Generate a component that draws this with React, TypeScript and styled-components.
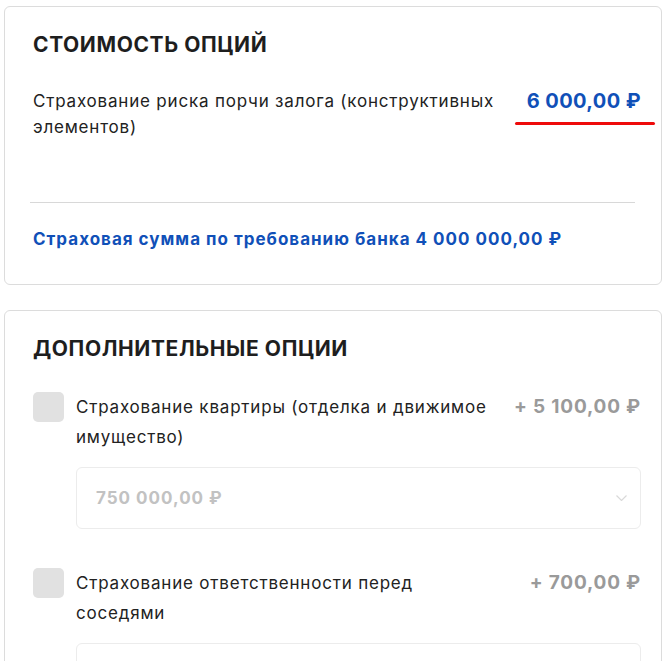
import styled, { createGlobalStyle } from "styled-components";

const GlobalStyle = createGlobalStyle`
  body {
    margin: 0;
    background: #ffffff;
    font-family: Inter, "Noto Sans", sans-serif;
    color: #222222;
  }
`;

const options = [
  {
    title: "Страхование квартиры (отделка и движимое имущество)",
    price: "+ 5 100,00 ₽",
    sum: "750 000,00 ₽",
  },
  {
    title: "Страхование ответственности перед соседями",
    price: "+ 700,00 ₽",
    sum: "300 000,00 ₽",
  },
];

const App = () => {
  return (
    <Page>
      <GlobalStyle />
      <Card>
        <Title>Стоимость опций</Title>
        <CostRow>
          <CostText>Страхование риска порчи залога (конструктивных элементов)</CostText>
          <CostPrice>6 000,00 ₽</CostPrice>
        </CostRow>
        <Divider />
        <BankSum>Страховая сумма по требованию банка 4 000 000,00 ₽</BankSum>
      </Card>

      <Card $tall>
        <Title>Дополнительные опции</Title>
        {options.map((opt) => (
          <Option key={opt.title}>
            <OptionHead>
              <Checkbox />
              <OptionText>{opt.title}</OptionText>
              <OptionPrice>{opt.price}</OptionPrice>
            </OptionHead>
            <Select>
              <span>{opt.sum}</span>
              <svg width="11" height="6" viewBox="0 0 11 6" fill="none">
                <path d="M0.5 0.5l5 5 5-5" stroke="#d9d9d9" strokeWidth="1.2" />
              </svg>
            </Select>
          </Option>
        ))}
      </Card>
    </Page>
  );
};

export default App;

const Page = styled.div`
  padding: 6px 7px 0 4px;
  display: flex;
  flex-direction: column;
  gap: 25px;
  height: 661px;
  overflow: hidden;
  box-sizing: border-box;
`;

const Card = styled.div<{ $tall?: boolean }>`
  border: 1px solid #dcdcdc;
  border-radius: 6px;
  padding: 26px 20px ${(p) => (p.$tall ? "0" : "34px")} 28px;
  flex-shrink: 0;
`;

const Title = styled.h2`
  margin: 0 0 31px;
  font-size: 21px;
  line-height: 24px;
  font-weight: 700;
  text-transform: uppercase;
  color: #1e1e1e;
  letter-spacing: 0.6px;
`;

const CostRow = styled.div`
  display: flex;
  justify-content: space-between;
  align-items: flex-start;
  gap: 20px;
  min-height: 114px;
`;

const CostText = styled.div`
  font-size: 17px;
  line-height: 26px;
  letter-spacing: 0.8px;
  max-width: 475px;
`;

const CostPrice = styled.div`
  position: relative;
  font-size: 20px;
  line-height: 26px;
  font-weight: 700;
  letter-spacing: 0.4px;
  color: #1050b8;
  white-space: nowrap;

  &::after {
    content: "";
    position: absolute;
    left: -12px;
    right: -14px;
    top: 34px;
    height: 3px;
    border-radius: 2px;
    background: #ee0a0a;
  }
`;

const Divider = styled.hr`
  margin: 0 6px 0 -3px;
  border: none;
  border-top: 1px solid #d8d8d8;
`;

const BankSum = styled.div`
  margin-top: 25px;
  font-size: 17px;
  line-height: 22px;
  font-weight: 700;
  letter-spacing: 1px;
  color: #1050b8;
`;

const Option = styled.div`
  display: flex;
  flex-direction: column;
  gap: 15px;
  margin-bottom: 39px;
`;

const OptionHead = styled.div`
  display: flex;
  align-items: flex-start;
  gap: 20px;
`;

const Checkbox = styled.div`
  width: 31px;
  height: 30px;
  border-radius: 5px;
  background: #e1e1e1;
  flex-shrink: 0;
  margin: 0 -8px -1px 0;
`;

const OptionText = styled.div`
  flex: 1;
  font-size: 17px;
  line-height: 30px;
  letter-spacing: 0.8px;
  max-width: 425px;
`;

const OptionPrice = styled.div`
  margin-left: auto;
  font-size: 19px;
  line-height: 30px;
  font-weight: 700;
  letter-spacing: 0.8px;
  color: #9a9a9a;
  white-space: nowrap;
`;

const Select = styled.div`
  margin-left: 43px;
  height: 60px;
  border: 1px solid #ececec;
  border-radius: 6px;
  display: flex;
  align-items: center;
  justify-content: space-between;
  padding: 0 13px 0 19px;
  font-size: 17px;
  font-weight: 700;
  letter-spacing: 1px;
  color: #c2c2c2;
`;
